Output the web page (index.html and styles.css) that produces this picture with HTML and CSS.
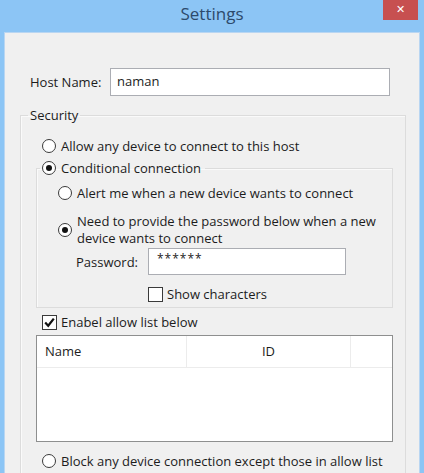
FILE: index.html
```html
<!DOCTYPE html>
<html lang="en">
<head>
  <meta charset="UTF-8">
  <meta name="viewport" content="width=device-width, initial-scale=1.0">
  <title>Settings</title>
  <link rel="stylesheet" href="styles.css">
</head>
<body>
  <div class="window">
    <div class="titlebar">
      <span></span>
      <h1 class="title">Settings</h1>
      <button class="close" title="Close">&#x2715;</button>
    </div>
    <div class="client">
      <div class="field-row host-row">
        <label class="field-label">Host Name:</label>
        <div class="textbox host-box">naman</div>
      </div>

      <fieldset class="group security">
        <legend class="group-title">Security</legend>

        <div class="option outer">
          <span class="radio"></span>
          <span>Allow any device to connect to this host</span>
        </div>

        <fieldset class="group conditional">
          <legend class="option group-radio">
            <span class="radio checked"></span>
            <span>Conditional connection</span>
          </legend>

          <div class="option inner alert-row">
            <span class="radio"></span>
            <span>Alert me when a new device wants to connect</span>
          </div>

          <div class="option inner multi">
            <span class="radio checked"></span>
            <span class="multi-text">Need to provide the password below when a new<br>device wants to connect</span>
          </div>

          <div class="field-row pw-row">
            <label class="field-label">Password:</label>
            <div class="textbox pw-box">******</div>
          </div>

          <div class="option show-row">
            <span class="check"></span>
            <span>Show characters</span>
          </div>
        </fieldset>

        <div class="option outer enable-row">
          <span class="check checked">
            <svg width="13" height="13" viewBox="0 0 13 13"><path d="M2.2 6.6 L5.2 9.8 L10.8 2.6" fill="none" stroke="#111" stroke-width="2.2"/></svg>
          </span>
          <span>Enabel allow list below</span>
        </div>

        <div class="listview">
          <div class="list-head">
            <div class="col col-name">Name</div>
            <div class="col col-id">ID</div>
            <div class="col col-rest"></div>
          </div>
          <div class="list-body"></div>
        </div>

        <div class="option outer block-row">
          <span class="radio"></span>
          <span>Block any device connection except those in allow list</span>
        </div>
      </fieldset>
    </div>
  </div>
</body>
</html>
```

FILE: styles.css
```css
body {
  margin: 0;
  font-family: 'Open Sans', 'Noto Sans', sans-serif;
  font-size: 13px;
  color: #1c1c1c;
  background-color: #8cc5f5;
}
.window {
  height: 473px;
  display: flex;
  flex-direction: column;
  padding: 0 4px;
  box-sizing: border-box;
  overflow: hidden;
}
.titlebar {
  height: 32px;
  display: grid;
  grid-template-columns: 1fr auto 1fr;
  align-items: start;
  flex-shrink: 0;
}
.title {
  margin: 0;
  font-size: 17px;
  font-weight: normal;
  color: #2c4a6c;
  line-height: 28px;
}
.close {
  justify-self: end;
  margin-right: 2px;
  width: 35px;
  height: 20px;
  border: none;
  padding: 0;
  background-color: #c75050;
  color: #fff;
  font-size: 11px;
  font-weight: bold;
  line-height: 20px;
  font-family: 'DejaVu Sans', sans-serif;
}
.client {
  flex-grow: 1;
  background-color: #f0f0f0;
  border: 1px solid #b9d6f2;
  border-bottom: none;
  padding: 35px 13px 0 15px;
}
.field-row {
  display: flex;
  align-items: center;
}
.host-row {
  padding-left: 10px;
}
.host-row .field-label {
  width: 80px;
}
.textbox {
  background-color: #fff;
  border: 1px solid #abadb3;
  box-sizing: border-box;
  padding-left: 6px;
}
.host-box {
  width: 280px;
  height: 28px;
  line-height: 25px;
}
.group {
  margin: 0;
  border: 1px solid #dcdcdc;
  box-shadow: inset 1px 1px 0 #fafafa;
}
.security {
  margin-top: 10px;
  padding: 12px 12px 0 7px;
  height: 400px;
  box-sizing: border-box;
}
.group-title {
  padding: 0 2px;
  line-height: 18px;
}
.option {
  display: flex;
  align-items: center;
  line-height: 20px;
}
.outer {
  margin-left: 14px;
}
.radio {
  width: 14px;
  height: 14px;
  box-sizing: border-box;
  border: 1px solid #3a3a3a;
  border-radius: 50%;
  background-color: #fff;
  margin-right: 5px;
  flex-shrink: 0;
  position: relative;
}
.radio.checked::after {
  content: '';
  position: absolute;
  left: 3px;
  top: 3px;
  width: 6px;
  height: 6px;
  border-radius: 50%;
  background-color: #111;
}
.check {
  width: 15px;
  height: 15px;
  box-sizing: border-box;
  border: 1px solid #3a3a3a;
  background-color: #fff;
  margin-right: 4px;
  flex-shrink: 0;
  display: flex;
  align-items: center;
  justify-content: center;
}
.conditional {
  margin: 2px 0 0 8px;
  padding: 3px 0 3px 3px;
}
.group-radio {
  padding: 0 4px 0 2px;
}
.inner {
  margin-left: 18px;
}
.alert-row {
  margin-top: 2px;
}
.multi {
  margin-top: 10px;
  line-height: 16.5px;
}
.pw-row {
  margin: 2px 0 0 36px;
}
.pw-row .field-label {
  width: 72px;
}
.pw-box {
  width: 198px;
  height: 27px;
  line-height: 20px;
  padding-left: 8px;
  font-size: 12px;
  letter-spacing: 1px;
}
.show-row {
  margin: 9px 0 0 108px;
}
.enable-row {
  margin-top: 4px;
}
.listview {
  margin: 3px 0 0 8px;
  height: 107px;
  border: 1px solid #8e8f8f;
  background-color: #fff;
  box-sizing: border-box;
}
.list-head {
  display: flex;
  height: 31px;
  border-bottom: 1px solid #ececec;
}
.col {
  line-height: 31px;
  border-right: 1px solid #ececec;
}
.col-name {
  width: 150px;
  padding-left: 8px;
  box-sizing: border-box;
}
.col-id {
  width: 163px;
  text-align: center;
}
.col-rest {
  flex-grow: 1;
  border-right: none;
}
.block-row {
  margin-top: 9px;
}
```
